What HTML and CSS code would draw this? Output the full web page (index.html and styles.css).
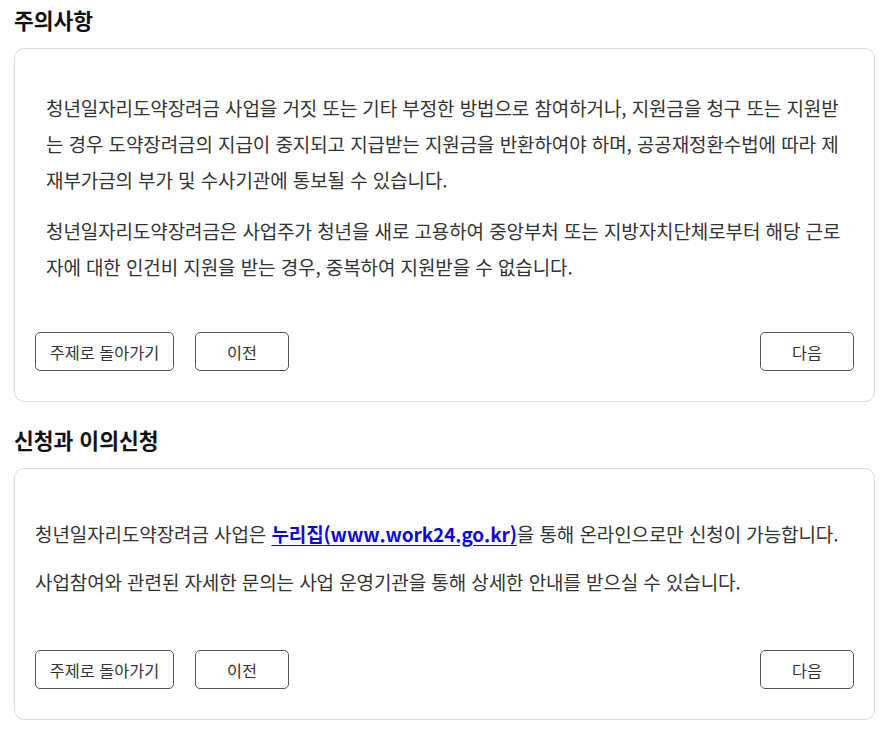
FILE: index.html
```html
<!DOCTYPE html>
<html lang="ko">
<head>
<meta charset="utf-8">
<link rel="stylesheet" href="styles.css">
</head>
<body>
<section class="section">
  <h2 class="title">주의사항</h2>
  <div class="card card-notice">
    <div class="content indent">
      <p class="para">청년일자리도약장려금 사업을 거짓 또는 기타 부정한 방법으로 참여하거나, 지원금을 청구 또는 지원받는 경우 도약장려금의 지급이 중지되고 지급받는 지원금을 반환하여야 하며, 공공재정환수법에 따라 제재부가금의 부가 및 수사기관에 통보될 수 있습니다.</p>
      <p class="para">청년일자리도약장려금은 사업주가 청년을 새로 고용하여 중앙부처 또는 지방자치단체로부터 해당 근로자에 대한 인건비 지원을 받는 경우, 중복하여 지원받을 수 없습니다.</p>
    </div>
    <div class="actions">
      <div class="actions-left">
        <button class="btn btn-wide">주제로 돌아가기</button>
        <button class="btn">이전</button>
      </div>
      <button class="btn">다음</button>
    </div>
  </div>
</section>
<section class="section second">
  <h2 class="title">신청과 이의신청</h2>
  <div class="card card-apply">
    <div class="content">
      <p class="para">청년일자리도약장려금 사업은 <a class="link" href="#">누리집(www.work24.go.kr)</a>을 통해 온라인으로만 신청이 가능합니다.</p>
      <p class="para">사업참여와 관련된 자세한 문의는 사업 운영기관을 통해 상세한 안내를 받으실 수 있습니다.</p>
    </div>
    <div class="actions">
      <div class="actions-left">
        <button class="btn btn-wide">주제로 돌아가기</button>
        <button class="btn">이전</button>
      </div>
      <button class="btn">다음</button>
    </div>
  </div>
</section>
</body>
</html>
```

FILE: styles.css
```css
* { box-sizing: border-box; }
html, body { background: #fff; }
body {
  margin: 0;
  padding: 0 14px;
  font-family: "Noto Sans CJK KR", "Noto Sans", sans-serif;
  color: #333;
}
.title {
  margin: 6px 0 14px;
  font-size: 21.5px;
  line-height: 28px;
  font-weight: 700;
  color: #111;
}
.second .title { margin-top: 24px; }
.card {
  border: 1px solid #dcdcdc;
  border-radius: 10px;
  padding: 0 20px 30px;
}
.card-notice { padding-top: 41px; }
.card-apply { padding-top: 47px; }
.content.indent { padding-left: 11px; padding-right: 6px; }
.para {
  margin: 0;
  font-size: 19px;
  line-height: 36px;
  letter-spacing: -0.1px;
}
.card-notice .para + .para { margin-top: 15px; }
.card-apply .para + .para { margin-top: 12px; }
.card-notice .actions { margin-top: 47px; }
.card-apply .actions { margin-top: 50px; }
.link {
  color: #0a0ad8;
  font-weight: 700;
  text-decoration: underline;
  text-decoration-color: #1a1a5e;
  text-underline-offset: 3px;
}
.actions {
  display: flex;
  justify-content: space-between;
  align-items: center;
}
.actions-left { display: flex; gap: 21px; }
.btn {
  height: 39px;
  width: 94px;
  padding: 0;
  border: 1px solid #555;
  border-radius: 5px;
  background: #fff;
  font-family: "Noto Sans CJK KR", "Noto Sans", sans-serif;
  font-size: 16.3px;
  color: #333;
}
.btn-wide { width: 139px; }
```
